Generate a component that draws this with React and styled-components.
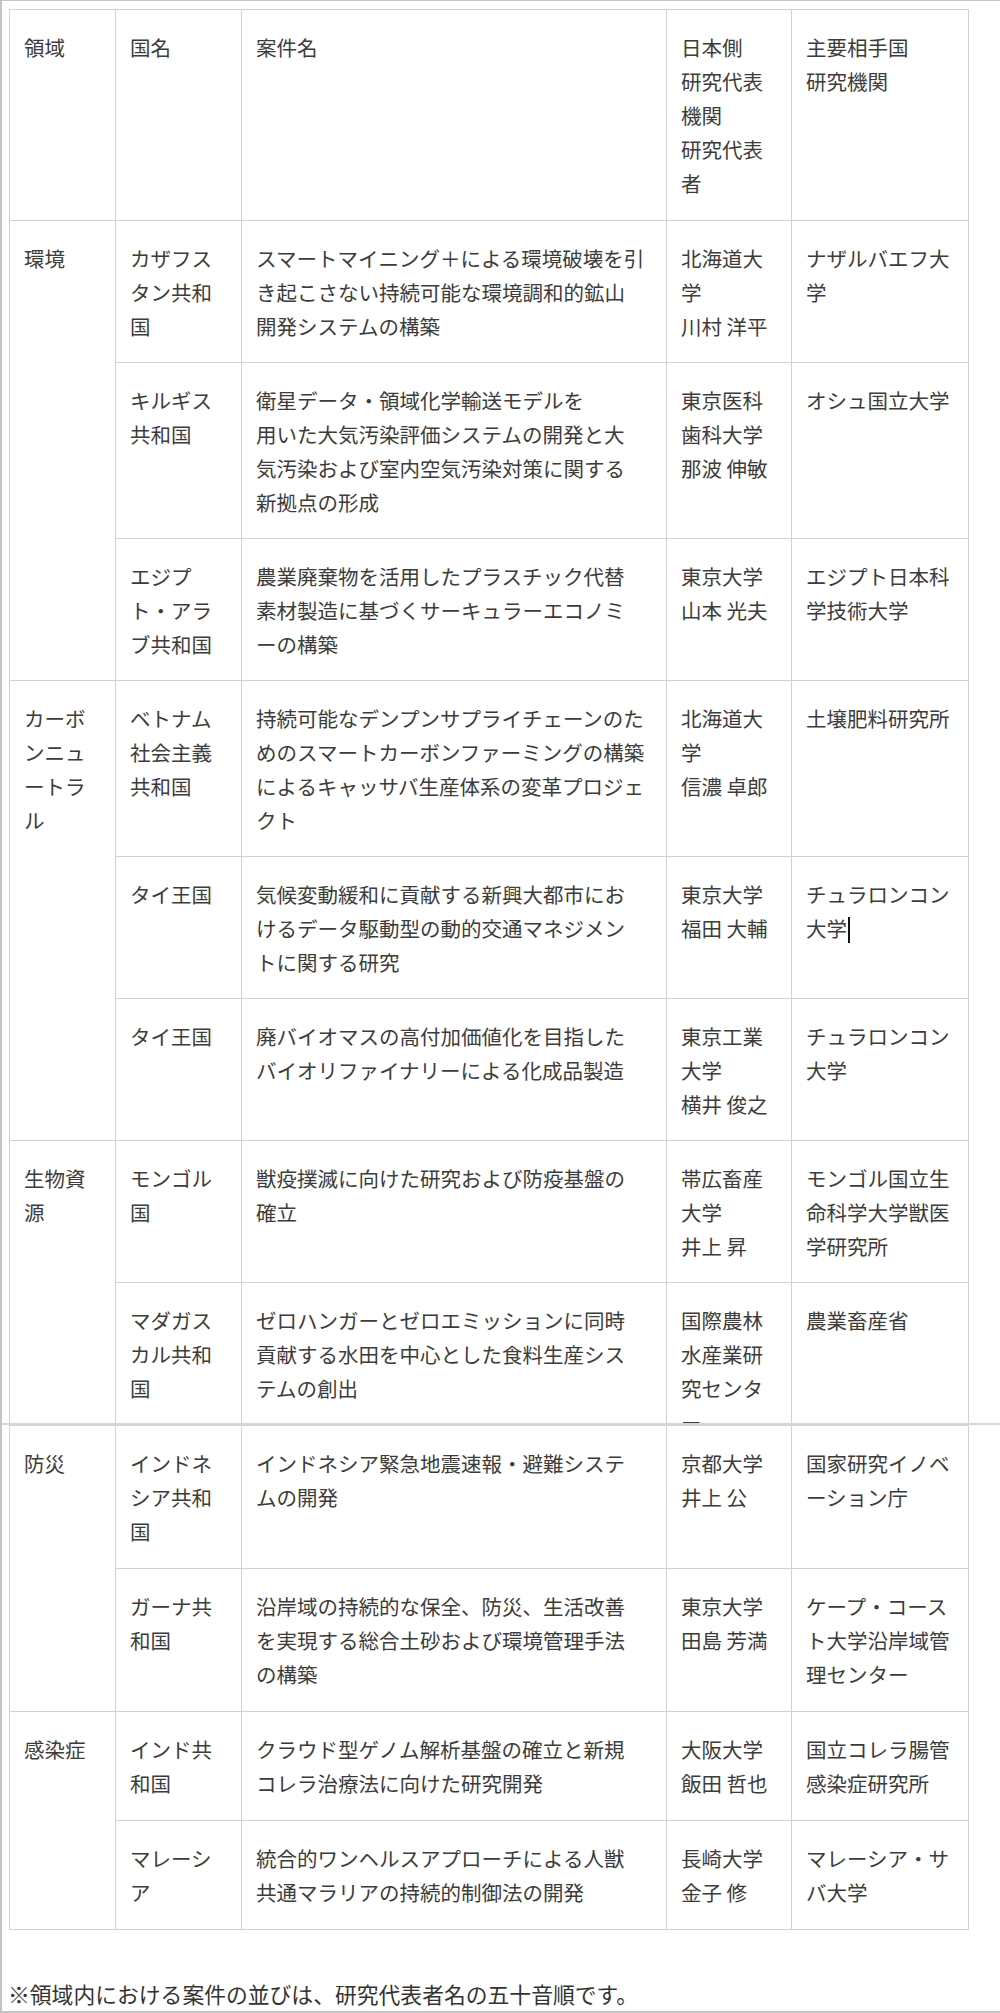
import React from "react";
import styled, { createGlobalStyle } from "styled-components";

const GlobalStyle = createGlobalStyle`
    html, body {
        margin: 0;
        padding: 0;
        background: #fff;
    }
    body {
        font-family: "Noto Sans CJK JP", "Noto Sans", sans-serif;
        color: #3a3a3a;
    }
`;

const widths = [106, 126, 425, 125, 177];

const header = [
    ["領域"],
    ["国名"],
    ["案件名"],
    ["日本側", "研究代表", "機関", "研究代表", "者"],
    ["主要相手国", "研究機関"],
];

// first half of the table (before the page break)
const groupsTop = [
    {
        field: ["環境"],
        rows: [
            {
                country: ["カザフス", "タン共和", "国"],
                title: [
                    "スマートマイニング＋による環境破壊を引",
                    "き起こさない持続可能な環境調和的鉱山",
                    "開発システムの構築",
                ],
                japan: ["北海道大", "学", "川村 洋平"],
                partner: ["ナザルバエフ大", "学"],
            },
            {
                country: ["キルギス", "共和国"],
                title: [
                    "衛星データ・領域化学輸送モデルを",
                    "用いた大気汚染評価システムの開発と大",
                    "気汚染および室内空気汚染対策に関する",
                    "新拠点の形成",
                ],
                japan: ["東京医科", "歯科大学", "那波 伸敏"],
                partner: ["オシュ国立大学"],
            },
            {
                country: ["エジプ", "ト・アラ", "ブ共和国"],
                title: [
                    "農業廃棄物を活用したプラスチック代替",
                    "素材製造に基づくサーキュラーエコノミ",
                    "ーの構築",
                ],
                japan: ["東京大学", "山本 光夫"],
                partner: ["エジプト日本科", "学技術大学"],
            },
        ],
    },
    {
        field: ["カーボ", "ンニュ", "ートラ", "ル"],
        rows: [
            {
                country: ["ベトナム", "社会主義", "共和国"],
                title: [
                    "持続可能なデンプンサプライチェーンのた",
                    "めのスマートカーボンファーミングの構築",
                    "によるキャッサバ生産体系の変革プロジェ",
                    "クト",
                ],
                japan: ["北海道大", "学", "信濃 卓郎"],
                partner: ["土壌肥料研究所"],
            },
            {
                country: ["タイ王国"],
                title: [
                    "気候変動緩和に貢献する新興大都市にお",
                    "けるデータ駆動型の動的交通マネジメン",
                    "トに関する研究",
                ],
                japan: ["東京大学", "福田 大輔"],
                partner: ["チュラロンコン", "大学"],
                caret: true,
            },
            {
                country: ["タイ王国"],
                title: [
                    "廃バイオマスの高付加価値化を目指した",
                    "バイオリファイナリーによる化成品製造",
                ],
                japan: ["東京工業", "大学", "横井 俊之"],
                partner: ["チュラロンコン", "大学"],
            },
        ],
    },
    {
        field: ["生物資", "源"],
        rows: [
            {
                country: ["モンゴル", "国"],
                title: [
                    "獣疫撲滅に向けた研究および防疫基盤の",
                    "確立",
                ],
                japan: ["帯広畜産", "大学", "井上 昇"],
                partner: ["モンゴル国立生", "命科学大学獣医", "学研究所"],
            },
            {
                country: ["マダガス", "カル共和", "国"],
                title: [
                    "ゼロハンガーとゼロエミッションに同時",
                    "貢献する水田を中心とした食料生産シス",
                    "テムの創出",
                ],
                japan: ["国際農林", "水産業研", "究センタ", "ー"],
                partner: ["農業畜産省"],
            },
        ],
    },
];

const groupsBottom = [
    {
        field: ["防災"],
        rows: [
            {
                country: ["インドネ", "シア共和", "国"],
                title: [
                    "インドネシア緊急地震速報・避難システ",
                    "ムの開発",
                ],
                japan: ["京都大学", "井上 公"],
                partner: ["国家研究イノベ", "ーション庁"],
            },
            {
                country: ["ガーナ共", "和国"],
                title: [
                    "沿岸域の持続的な保全、防災、生活改善",
                    "を実現する総合土砂および環境管理手法",
                    "の構築",
                ],
                japan: ["東京大学", "田島 芳満"],
                partner: ["ケープ・コース", "ト大学沿岸域管", "理センター"],
            },
        ],
    },
    {
        field: ["感染症"],
        rows: [
            {
                country: ["インド共", "和国"],
                title: [
                    "クラウド型ゲノム解析基盤の確立と新規",
                    "コレラ治療法に向けた研究開発",
                ],
                japan: ["大阪大学", "飯田 哲也"],
                partner: ["国立コレラ腸管", "感染症研究所"],
            },
            {
                country: ["マレーシ", "ア"],
                title: [
                    "統合的ワンヘルスアプローチによる人獣",
                    "共通マラリアの持続的制御法の開発",
                ],
                japan: ["長崎大学", "金子 修"],
                partner: ["マレーシア・サ", "バ大学"],
            },
        ],
    },
];

function Lines({ lines, caret }) {
    return lines.map((line, i) => (
        <Line key={i}>
            {line}
            {caret && i === lines.length - 1 && <Caret />}
        </Line>
    ));
}

function Colgroup() {
    return (
        <colgroup>
            {widths.map((w, i) => (
                <Col key={i} $w={w} />
            ))}
        </colgroup>
    );
}

function GroupRows({ groups, tight }) {
    return groups.map((g, gi) =>
        g.rows.map((r, ri) => (
            <tr key={gi + "-" + ri}>
                {ri === 0 && (
                    <Cell $tight={tight} rowSpan={g.rows.length}>
                        <Lines lines={g.field} />
                    </Cell>
                )}
                <Cell $tight={tight}>
                    <Lines lines={r.country} />
                </Cell>
                <Cell $tight={tight}>
                    <Lines lines={r.title} />
                </Cell>
                <Cell $tight={tight}>
                    <Lines lines={r.japan} />
                </Cell>
                <Cell $tight={tight}>
                    <Lines lines={r.partner} caret={r.caret} />
                </Cell>
            </tr>
        ))
    );
}

function App() {
    return (
        <>
            <GlobalStyle />
            <Frame>
                <TopPart>
                    <Clip>
                        <Table>
                            <Colgroup />
                            <tbody>
                                <tr>
                                    {header.map((h, i) => (
                                        <Cell key={i}>
                                            <Lines lines={h} />
                                        </Cell>
                                    ))}
                                </tr>
                                <GroupRows groups={groupsTop} tight />
                            </tbody>
                        </Table>
                    </Clip>
                </TopPart>
                <BottomPart>
                    <Table $noTop>
                        <Colgroup />
                        <tbody>
                            <GroupRows groups={groupsBottom} />
                        </tbody>
                    </Table>
                </BottomPart>
                <Note>※領域内における案件の並びは、研究代表者名の五十音順です。</Note>
            </Frame>
        </>
    );
}

export default App;

// styled components
const Frame = styled.div`
    width: 1000px;
    height: 2013px;
    box-sizing: border-box;
    border-top: 1px solid #c4c4c4;
    border-left: 2px solid #c4c4c4;
    border-bottom: 2px solid #c4c4c4;
    overflow: hidden;
`;
const TopPart = styled.div`
    padding: 8px 0 0 7px;
`;
const Clip = styled.div`
    height: 1414px;
    overflow: hidden;
`;
const BottomPart = styled.div`
    border-top: 2px solid #d6d6d6;
    padding-left: 7px;
`;
const Table = styled.table`
    width: 959px;
    table-layout: fixed;
    border-collapse: collapse;
    border: 1px solid #d2d2d2;
    ${(p) => p.$noTop && "border-top: none;"}
`;
const Col = styled.col`
    width: ${(p) => p.$w}px;
`;
const Cell = styled.td`
    border: 1px solid #d2d2d2;
    padding: 20px 10px ${(p) => (p.$tight ? 19 : 20)}px 14px;
    vertical-align: top;
    font-size: 20.5px;
    line-height: 34px;
    color: #3c3c3c;
    white-space: nowrap;
    overflow: hidden;
`;
const Line = styled.div`
    height: 34px;
`;
const Caret = styled.span`
    display: inline-block;
    width: 2px;
    height: 26px;
    margin-left: 1px;
    vertical-align: -6px;
    background: #111;
`;
const Note = styled.p`
    margin: 47px 0 0;
    padding-left: 6px;
    font-size: 21.8px;
    line-height: 34px;
    color: #333;
`;
